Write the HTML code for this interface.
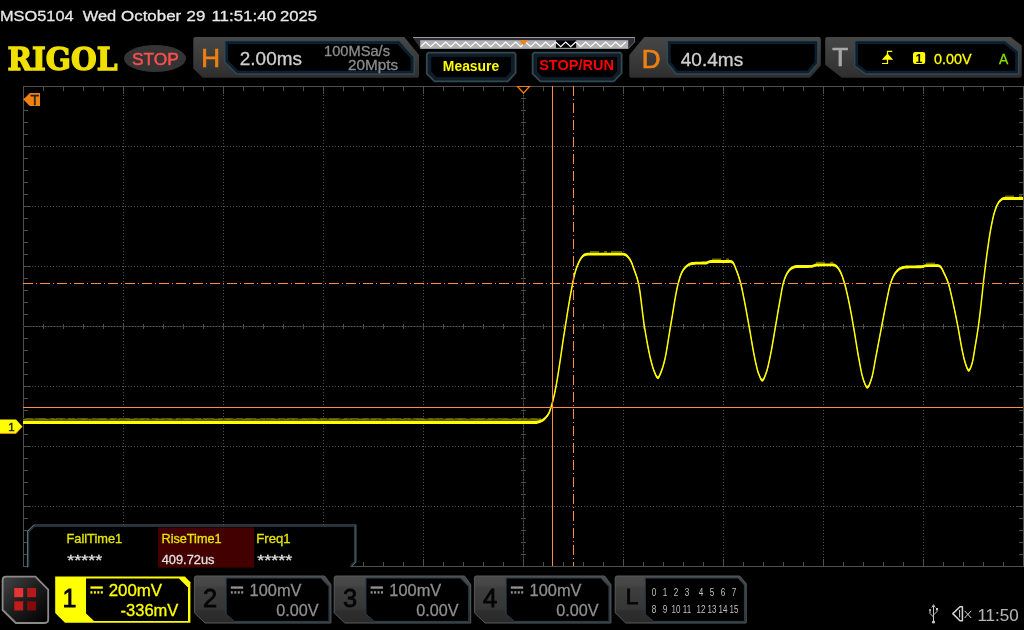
<!DOCTYPE html>
<html lang="en"><head><meta charset="utf-8"><title>RIGOL MSO5104</title>
<style>
html,body{margin:0;padding:0;background:#000;overflow:hidden}
svg{display:block;will-change:transform;font-family:"Liberation Sans",sans-serif}
</style></head><body>
<svg width="1024" height="630" viewBox="0 0 1024 630">
<rect width="1024" height="630" fill="#000"/>
<!-- plot -->
<g shape-rendering="crispEdges"><path d="M23.5 86.5H1023.5V566.5H23.5Z" fill="none" stroke="#4d4f4b" stroke-width="1"/><path d="M123.5 86V566M223.5 86V566M323.5 86V566M423.5 86V566M623.5 86V566M723.5 86V566M823.5 86V566M923.5 86V566" stroke="#525450" stroke-width="1" stroke-dasharray="1 2" stroke-dashoffset="0" fill="none"/><path d="M23 146.5H1023M23 206.5H1023M23 266.5H1023M23 386.5H1023M23 446.5H1023M23 506.5H1023" stroke="#525450" stroke-width="1" stroke-dasharray="1 2" fill="none"/><path d="M523.5 94V566M23 326.5H1023" stroke="#2b312b" stroke-width="1" fill="none"/><path d="M523.5 95V566M24 326.5H1023" stroke="#545c54" stroke-width="1" stroke-dasharray="1 2" fill="none"/><path d="M43.5 87v4M43.5 566v-4M43.5 324v5M63.5 87v4M63.5 566v-4M63.5 324v5M83.5 87v4M83.5 566v-4M83.5 324v5M103.5 87v4M103.5 566v-4M103.5 324v5M123.5 87v7M123.5 566v-7M123.5 324v5M143.5 87v4M143.5 566v-4M143.5 324v5M163.5 87v4M163.5 566v-4M163.5 324v5M183.5 87v4M183.5 566v-4M183.5 324v5M203.5 87v4M203.5 566v-4M203.5 324v5M223.5 87v7M223.5 566v-7M223.5 324v5M243.5 87v4M243.5 566v-4M243.5 324v5M263.5 87v4M263.5 566v-4M263.5 324v5M283.5 87v4M283.5 566v-4M283.5 324v5M303.5 87v4M303.5 566v-4M303.5 324v5M323.5 87v7M323.5 566v-7M323.5 324v5M343.5 87v4M343.5 566v-4M343.5 324v5M363.5 87v4M363.5 566v-4M363.5 324v5M383.5 87v4M383.5 566v-4M383.5 324v5M403.5 87v4M403.5 566v-4M403.5 324v5M423.5 87v7M423.5 566v-7M423.5 324v5M443.5 87v4M443.5 566v-4M443.5 324v5M463.5 87v4M463.5 566v-4M463.5 324v5M483.5 87v4M483.5 566v-4M483.5 324v5M503.5 87v4M503.5 566v-4M503.5 324v5M523.5 87v7M523.5 566v-7M523.5 324v5M543.5 87v4M543.5 566v-4M543.5 324v5M563.5 87v4M563.5 566v-4M563.5 324v5M583.5 87v4M583.5 566v-4M583.5 324v5M603.5 87v4M603.5 566v-4M603.5 324v5M623.5 87v7M623.5 566v-7M623.5 324v5M643.5 87v4M643.5 566v-4M643.5 324v5M663.5 87v4M663.5 566v-4M663.5 324v5M683.5 87v4M683.5 566v-4M683.5 324v5M703.5 87v4M703.5 566v-4M703.5 324v5M723.5 87v7M723.5 566v-7M723.5 324v5M743.5 87v4M743.5 566v-4M743.5 324v5M763.5 87v4M763.5 566v-4M763.5 324v5M783.5 87v4M783.5 566v-4M783.5 324v5M803.5 87v4M803.5 566v-4M803.5 324v5M823.5 87v7M823.5 566v-7M823.5 324v5M843.5 87v4M843.5 566v-4M843.5 324v5M863.5 87v4M863.5 566v-4M863.5 324v5M883.5 87v4M883.5 566v-4M883.5 324v5M903.5 87v4M903.5 566v-4M903.5 324v5M923.5 87v7M923.5 566v-7M923.5 324v5M943.5 87v4M943.5 566v-4M943.5 324v5M963.5 87v4M963.5 566v-4M963.5 324v5M983.5 87v4M983.5 566v-4M983.5 324v5M1003.5 87v4M1003.5 566v-4M1003.5 324v5M24 98.5h4M1023 98.5h-4M521 98.5h5M24 110.5h4M1023 110.5h-4M521 110.5h5M24 122.5h4M1023 122.5h-4M521 122.5h5M24 134.5h4M1023 134.5h-4M521 134.5h5M24 146.5h7M1023 146.5h-7M521 146.5h5M24 158.5h4M1023 158.5h-4M521 158.5h5M24 170.5h4M1023 170.5h-4M521 170.5h5M24 182.5h4M1023 182.5h-4M521 182.5h5M24 194.5h4M1023 194.5h-4M521 194.5h5M24 206.5h7M1023 206.5h-7M521 206.5h5M24 218.5h4M1023 218.5h-4M521 218.5h5M24 230.5h4M1023 230.5h-4M521 230.5h5M24 242.5h4M1023 242.5h-4M521 242.5h5M24 254.5h4M1023 254.5h-4M521 254.5h5M24 266.5h7M1023 266.5h-7M521 266.5h5M24 278.5h4M1023 278.5h-4M521 278.5h5M24 290.5h4M1023 290.5h-4M521 290.5h5M24 302.5h4M1023 302.5h-4M521 302.5h5M24 314.5h4M1023 314.5h-4M521 314.5h5M24 326.5h7M1023 326.5h-7M521 326.5h5M24 338.5h4M1023 338.5h-4M521 338.5h5M24 350.5h4M1023 350.5h-4M521 350.5h5M24 362.5h4M1023 362.5h-4M521 362.5h5M24 374.5h4M1023 374.5h-4M521 374.5h5M24 386.5h7M1023 386.5h-7M521 386.5h5M24 398.5h4M1023 398.5h-4M521 398.5h5M24 410.5h4M1023 410.5h-4M521 410.5h5M24 422.5h4M1023 422.5h-4M521 422.5h5M24 434.5h4M1023 434.5h-4M521 434.5h5M24 446.5h7M1023 446.5h-7M521 446.5h5M24 458.5h4M1023 458.5h-4M521 458.5h5M24 470.5h4M1023 470.5h-4M521 470.5h5M24 482.5h4M1023 482.5h-4M521 482.5h5M24 494.5h4M1023 494.5h-4M521 494.5h5M24 506.5h7M1023 506.5h-7M521 506.5h5M24 518.5h4M1023 518.5h-4M521 518.5h5M24 530.5h4M1023 530.5h-4M521 530.5h5M24 542.5h4M1023 542.5h-4M521 542.5h5M24 554.5h4M1023 554.5h-4M521 554.5h5" stroke="#4d4f4b" stroke-width="1" fill="none"/></g>
<rect x="23" y="418" width="518" height="3" fill="#5e5a00" /><path d="M23 418.5H541" stroke="#000" stroke-width="1" stroke-dasharray="3 7 2 11 4 5 1 9" opacity="0.55" fill="none"/><path d="M23 419.5H541" stroke="#8a8600" stroke-width="1" stroke-dasharray="5 3 2 6 9 4" opacity="0.6" fill="none"/><path d="M590 251.89999999999998L622 251.89999999999998" stroke="#6e6a00" stroke-width="1.6" stroke-dasharray="9 5 3 4 12 6" fill="none"/><path d="M712 259.2L730 259.2" stroke="#6e6a00" stroke-width="1.6" stroke-dasharray="9 5 3 4 12 6" fill="none"/><path d="M816 262.59999999999997L833 262.59999999999997" stroke="#6e6a00" stroke-width="1.6" stroke-dasharray="9 5 3 4 12 6" fill="none"/><path d="M926 263.4L938 263.4" stroke="#6e6a00" stroke-width="1.6" stroke-dasharray="9 5 3 4 12 6" fill="none"/><path d="M1005 196.2L1023 196.2" stroke="#6e6a00" stroke-width="1.6" stroke-dasharray="9 5 3 4 12 6" fill="none"/><rect x="23" y="421" width="514" height="3" fill="#ffff00" shape-rendering="crispEdges"/><path d="M536 420.9 537 420.8 538 420.6 539 420.3 540 420.0 541 419.6 542 419.2 543 418.6 544 417.8 545 416.9 546 415.9 547 414.7 548 413.3 549 411.6 550 409.0 551 405.9 552 402.6 553 398.9 554 394.8 555 390.1 556 384.9 557 379.3 558 373.2 559 366.7 560 360.2 561 353.3 562 346.3 563 339.6 564 333.2 565 326.9 566 320.6 567 314.2 568 307.9 569 301.8 570 296.1 571 290.6 572 285.4 573 280.2 574 275.3 575 271.3 576 268.0 577 265.2 578 262.7 579 260.4 580 258.4 581 256.9 582 255.5 583 254.4 584 253.6 585 253.3 586 252.9 587 252.8 588 252.8 589 252.8 590 252.8 591 252.8 592 252.8 593 252.8 594 252.8 595 252.8 596 252.8 597 252.8 598 252.8 599 252.8 600 252.8 601 252.8 602 252.8 603 252.8 604 252.8 605 252.8 606 252.8 607 252.8 608 252.8 609 252.8 610 252.8 611 252.8 612 252.8 613 252.8 614 252.8 615 252.8 616 252.8 617 252.8 618 252.8 619 252.8 620 252.8 621 252.8 622 252.8 623 252.8 624 252.9 625 253.2 626 253.6 627 254.3 628 255.4 629 256.7 630 258.1 631 259.8 632 262.2 633 264.9 634 267.8 635 270.5 636 273.3 637 276.3 638 279.9 639 284.4 640 290.7 641 298.4 642 306.7 643 314.9 644 322.4 645 328.6 646 334.5 647 340.2 648 345.6 649 350.6 650 355.2 651 359.3 652 363.1 653 366.5 654 369.4 655 371.9 656 374.2 657 375.9 658 376.4 659 375.3 660 373.1 661 370.6 662 368.1 663 364.9 664 361.3 665 357.3 666 352.3 667 346.6 668 340.4 669 334.0 670 327.9 671 322.1 672 316.0 673 309.9 674 303.7 675 297.7 676 292.1 677 287.1 678 282.7 679 279.0 680 275.6 681 272.8 682 270.5 683 268.9 684 267.4 685 266.2 686 265.2 687 264.4 688 263.7 689 263.1 690 262.7 691 262.3 692 262.1 693 262.0 694 261.9 695 261.8 696 261.8 697 261.7 698 261.7 699 261.7 700 261.7 701 261.7 702 261.6 703 261.6 704 261.6 705 261.6 706 261.6 707 261.3 708 260.8 709 260.4 710 260.2 711 260.1 712 260.1 713 260.1 714 260.1 715 260.0 716 260.0 717 260.0 718 260.0 719 260.0 720 260.0 721 260.0 722 260.0 723 260.0 724 260.0 725 260.0 726 260.0 727 260.0 728 260.0 729 260.0 730 259.9 731 260.1 732 260.5 733 261.1 734 262.8 735 265.2 736 267.8 737 270.3 738 273.1 739 276.1 740 279.4 741 283.1 742 287.5 743 292.4 744 297.4 745 302.6 746 307.9 747 313.3 748 318.9 749 324.4 750 330.1 751 336.0 752 342.0 753 347.7 754 353.0 755 357.9 756 362.6 757 367.0 758 370.5 759 373.2 760 375.8 761 377.8 762 378.9 763 378.6 764 377.0 765 374.6 766 371.9 767 368.9 768 365.1 769 360.6 770 355.9 771 351.0 772 345.6 773 339.8 774 333.8 775 327.9 776 322.1 777 316.2 778 310.3 779 304.5 780 298.9 781 293.0 782 287.4 783 282.7 784 279.2 785 276.3 786 273.9 787 272.1 788 270.5 789 269.1 790 268.0 791 267.1 792 266.5 793 266.0 794 265.6 795 265.3 796 265.1 797 265.1 798 265.1 799 265.1 800 265.0 801 265.0 802 265.0 803 265.0 804 265.0 805 265.0 806 265.0 807 265.0 808 265.0 809 264.9 810 264.9 811 264.9 812 264.9 813 264.6 814 264.2 815 263.8 816 263.6 817 263.5 818 263.5 819 263.5 820 263.5 821 263.4 822 263.4 823 263.4 824 263.4 825 263.4 826 263.4 827 263.4 828 263.4 829 263.4 830 263.4 831 263.4 832 263.4 833 263.4 834 263.5 835 263.9 836 264.5 837 265.3 838 266.5 839 268.0 840 269.6 841 271.6 842 274.2 843 277.0 844 280.2 845 283.5 846 287.4 847 291.6 848 296.2 849 301.0 850 305.9 851 311.2 852 316.7 853 322.4 854 328.1 855 334.2 856 340.5 857 346.7 858 352.5 859 358.0 860 363.5 861 368.7 862 373.4 863 377.1 864 380.0 865 382.7 866 384.8 867 385.9 868 385.6 869 384.1 870 381.7 871 378.8 872 375.7 873 371.2 874 365.9 875 360.1 876 354.7 877 349.5 878 344.3 879 338.9 880 333.6 881 328.3 882 323.1 883 317.8 884 312.6 885 307.4 886 302.3 887 297.5 888 292.6 889 287.9 890 283.8 891 280.7 892 277.9 893 275.6 894 273.6 895 272.0 896 270.7 897 269.5 898 268.6 899 267.8 900 267.2 901 266.7 902 266.3 903 266.1 904 265.9 905 265.7 906 265.6 907 265.5 908 265.5 909 265.4 910 265.4 911 265.4 912 265.4 913 265.4 914 265.4 915 265.4 916 265.4 917 265.3 918 265.3 919 265.3 920 265.3 921 265.3 922 265.2 923 265.1 924 264.7 925 264.4 926 264.2 927 264.2 928 264.2 929 264.2 930 264.2 931 264.2 932 264.2 933 264.2 934 264.2 935 264.2 936 264.2 937 264.2 938 264.2 939 264.4 940 264.9 941 265.8 942 267.4 943 269.5 944 271.6 945 273.7 946 275.8 947 278.2 948 280.9 949 284.0 950 287.8 951 292.1 952 296.7 953 301.2 954 305.8 955 310.6 956 315.6 957 320.6 958 325.8 959 331.3 960 337.1 961 342.8 962 348.1 963 352.7 964 357.0 965 360.8 966 363.8 967 366.5 968 368.6 969 369.0 970 367.7 971 365.2 972 362.3 973 358.1 974 352.3 975 346.0 976 340.0 977 333.9 978 327.3 979 320.1 980 312.3 981 303.8 982 294.3 983 284.7 984 276.0 985 267.7 986 259.8 987 252.3 988 245.1 989 238.2 990 231.8 991 226.2 992 221.1 993 216.5 994 212.4 995 209.0 996 206.3 997 203.9 998 201.9 999 200.4 1000 199.3 1001 198.4 1002 197.6 1003 197.2 1004 197.1 1005 197.1 1006 197.1 1007 197.1 1008 197.1 1009 197.1 1010 197.1 1011 197.1 1012 197.1 1013 197.1 1014 197.1 1015 197.1 1016 197.1 1017 197.1 1018 197.1 1019 197.1 1020 197.1 1021 197.1 1022 197.1 1023 197.1 1023 199.9 1022 199.9 1021 199.9 1020 199.9 1019 199.9 1018 199.9 1017 199.9 1016 199.9 1015 199.9 1014 199.9 1013 199.9 1012 199.9 1011 199.9 1010 199.9 1009 199.9 1008 199.9 1007 199.9 1006 199.9 1005 199.9 1004 199.9 1003 200.1 1002 200.5 1001 201.3 1000 202.2 999 203.3 998 204.8 997 206.8 996 209.2 995 211.9 994 215.3 993 219.4 992 224.0 991 229.0 990 234.7 989 241.1 988 248.0 987 255.2 986 262.7 985 270.6 984 278.9 983 287.6 982 297.2 981 306.7 980 315.2 979 323.0 978 330.2 977 336.8 976 342.9 975 348.9 974 355.2 973 361.0 972 365.2 971 368.1 970 370.6 969 371.9 968 371.5 967 369.4 966 366.7 965 363.7 964 359.9 963 355.6 962 351.0 961 345.7 960 340.0 959 334.2 958 328.7 957 323.5 956 318.5 955 313.5 954 308.7 953 304.1 952 299.6 951 295.0 950 290.7 949 286.9 948 283.8 947 281.1 946 278.7 945 276.6 944 274.5 943 272.4 942 270.3 941 268.7 940 267.8 939 267.3 938 267.1 937 267.1 936 267.1 935 267.1 934 267.1 933 267.1 932 267.1 931 267.1 930 267.1 929 267.1 928 267.1 927 267.1 926 267.1 925 267.3 924 267.6 923 268.0 922 268.1 921 268.2 920 268.2 919 268.2 918 268.2 917 268.2 916 268.3 915 268.3 914 268.3 913 268.3 912 268.3 911 268.3 910 268.3 909 268.3 908 268.4 907 268.4 906 268.5 905 268.6 904 268.8 903 269.0 902 269.2 901 269.6 900 270.1 899 270.7 898 271.5 897 272.4 896 273.6 895 274.9 894 276.5 893 278.5 892 280.8 891 283.6 890 286.7 889 290.8 888 295.5 887 300.4 886 305.2 885 310.3 884 315.5 883 320.7 882 326.0 881 331.2 880 336.5 879 341.8 878 347.2 877 352.4 876 357.6 875 363.0 874 368.8 873 374.1 872 378.6 871 381.7 870 384.6 869 387.0 868 388.5 867 388.8 866 387.7 865 385.6 864 382.9 863 380.0 862 376.3 861 371.6 860 366.4 859 360.9 858 355.4 857 349.6 856 343.4 855 337.1 854 331.0 853 325.3 852 319.6 851 314.1 850 308.8 849 303.9 848 299.1 847 294.5 846 290.3 845 286.4 844 283.1 843 279.9 842 277.1 841 274.5 840 272.5 839 270.9 838 269.4 837 268.2 836 267.4 835 266.8 834 266.4 833 266.2 832 266.3 831 266.3 830 266.3 829 266.3 828 266.3 827 266.3 826 266.3 825 266.3 824 266.3 823 266.3 822 266.3 821 266.3 820 266.4 819 266.4 818 266.4 817 266.4 816 266.4 815 266.7 814 267.1 813 267.5 812 267.8 811 267.8 810 267.8 809 267.8 808 267.9 807 267.9 806 267.9 805 267.9 804 267.9 803 267.9 802 267.9 801 267.9 800 267.9 799 268.0 798 268.0 797 268.0 796 268.0 795 268.2 794 268.5 793 268.9 792 269.4 791 270.0 790 270.9 789 272.0 788 273.4 787 275.0 786 276.8 785 279.2 784 282.1 783 285.6 782 290.3 781 295.9 780 301.8 779 307.4 778 313.2 777 319.1 776 325.0 775 330.8 774 336.7 773 342.7 772 348.5 771 353.9 770 358.8 769 363.5 768 368.0 767 371.8 766 374.8 765 377.5 764 379.9 763 381.5 762 381.8 761 380.7 760 378.7 759 376.1 758 373.4 757 369.9 756 365.5 755 360.8 754 355.9 753 350.6 752 344.9 751 338.9 750 333.0 749 327.3 748 321.8 747 316.2 746 310.8 745 305.5 744 300.3 743 295.3 742 290.4 741 286.0 740 282.3 739 279.0 738 276.0 737 273.2 736 270.7 735 268.1 734 265.7 733 264.0 732 263.4 731 263.0 730 262.8 729 262.9 728 262.9 727 262.9 726 262.9 725 262.9 724 262.9 723 262.9 722 262.9 721 262.9 720 262.9 719 262.9 718 262.9 717 262.9 716 262.9 715 262.9 714 263.0 713 263.0 712 263.0 711 263.0 710 263.1 709 263.3 708 263.7 707 264.2 706 264.4 705 264.5 704 264.5 703 264.5 702 264.5 701 264.6 700 264.6 699 264.6 698 264.6 697 264.6 696 264.6 695 264.7 694 264.8 693 264.9 692 265.0 691 265.2 690 265.6 689 266.0 688 266.6 687 267.3 686 268.1 685 269.1 684 270.3 683 271.8 682 273.4 681 275.7 680 278.5 679 281.9 678 285.6 677 290.0 676 295.0 675 300.6 674 306.6 673 312.8 672 318.9 671 325.0 670 330.8 669 336.9 668 343.3 667 349.5 666 355.2 665 360.2 664 364.2 663 367.8 662 371.0 661 373.5 660 376.0 659 378.2 658 379.3 657 378.8 656 377.1 655 374.8 654 372.3 653 369.4 652 366.0 651 362.2 650 358.1 649 353.5 648 348.5 647 343.1 646 337.4 645 331.5 644 325.3 643 317.8 642 309.6 641 301.3 640 293.6 639 287.3 638 282.8 637 279.2 636 276.2 635 273.4 634 270.7 633 267.8 632 265.1 631 262.7 630 261.0 629 259.6 628 258.3 627 257.2 626 256.5 625 256.1 624 255.8 623 255.6 622 255.6 621 255.6 620 255.6 619 255.6 618 255.6 617 255.6 616 255.6 615 255.6 614 255.6 613 255.6 612 255.6 611 255.6 610 255.6 609 255.6 608 255.6 607 255.6 606 255.6 605 255.6 604 255.6 603 255.6 602 255.6 601 255.6 600 255.6 599 255.6 598 255.6 597 255.6 596 255.6 595 255.6 594 255.6 593 255.6 592 255.6 591 255.6 590 255.6 589 255.6 588 255.6 587 255.7 586 255.8 585 256.2 584 256.5 583 257.3 582 258.4 581 259.8 580 261.3 579 263.3 578 265.6 577 268.1 576 270.9 575 274.2 574 278.2 573 283.1 572 288.3 571 293.5 570 299.0 569 304.7 568 310.8 567 317.1 566 323.5 565 329.8 564 336.1 563 342.4 562 349.2 561 356.2 560 363.1 559 369.6 558 376.1 557 382.2 556 387.8 555 393.0 554 397.7 553 401.8 552 405.5 551 408.8 550 411.9 549 414.4 548 416.2 547 417.6 546 418.8 545 419.8 544 420.7 543 421.5 542 422.1 541 422.5 540 422.9 539 423.2 538 423.5 537 423.7 536 423.8Z" fill="#ffff00"/><path d="M536 422.4 537 422.3 538 422.1 539 421.8 540 421.5 541 421.1 542 420.6 543 420.0 544 419.3 545 418.3 546 417.3 547 416.1 548 414.7 549 413.0 550 410.4 551 407.3 552 404.0 553 400.4 554 396.2 555 391.5 556 386.4 557 380.8 558 374.6 559 368.2 560 361.7 561 354.8 562 347.8 563 341.0 564 334.6 565 328.4 566 322.1 567 315.7 568 309.3 569 303.3 570 297.6 571 292.1 572 286.8 573 281.7 574 276.7 575 272.7 576 269.5 577 266.6 578 264.1 579 261.9 580 259.9 581 258.3 582 257.0 583 255.8 584 255.1 585 254.7 586 254.4 587 254.2 588 254.2 589 254.2 590 254.2 591 254.2 592 254.2 593 254.2 594 254.2 595 254.2 596 254.2 597 254.2 598 254.2 599 254.2 600 254.2 601 254.2 602 254.2 603 254.2 604 254.2 605 254.2 606 254.2 607 254.2 608 254.2 609 254.2 610 254.2 611 254.2 612 254.2 613 254.2 614 254.2 615 254.2 616 254.2 617 254.2 618 254.2 619 254.2 620 254.2 621 254.2 622 254.2 623 254.2 624 254.3 625 254.7 626 255.1 627 255.8 628 256.8 629 258.1 630 259.6 631 261.3 632 263.6 633 266.4 634 269.2 635 272.0 636 274.7 637 277.8 638 281.3 639 285.8 640 292.2 641 299.9 642 308.2 643 316.4 644 323.8 645 330.0 646 336.0 647 341.6 648 347.0 649 352.1 650 356.7 651 360.8 652 364.6 653 368.0 654 370.9 655 373.3 656 375.7 657 377.4 658 377.9 659 376.8 660 374.6 661 372.1 662 369.5 663 366.4 664 362.8 665 358.7 666 353.8 667 348.0 668 341.8 669 335.5 670 329.3 671 323.5 672 317.5 673 311.3 674 305.2 675 299.2 676 293.6 677 288.5 678 284.2 679 280.5 680 277.1 681 274.2 682 272.0 683 270.3 684 268.9 685 267.6 686 266.6 687 265.9 688 265.2 689 264.6 690 264.1 691 263.8 692 263.6 693 263.5 694 263.3 695 263.3 696 263.2 697 263.2 698 263.1 699 263.1 700 263.1 701 263.1 702 263.1 703 263.1 704 263.1 705 263.0 706 263.0 707 262.8 708 262.3 709 261.8 710 261.6 711 261.6 712 261.6 713 261.5 714 261.5 715 261.5 716 261.5 717 261.5 718 261.5 719 261.4 720 261.4 721 261.4 722 261.4 723 261.4 724 261.4 725 261.4 726 261.4 727 261.4 728 261.4 729 261.4 730 261.4 731 261.5 732 261.9 733 262.5 734 264.2 735 266.6 736 269.3 737 271.8 738 274.5 739 277.6 740 280.9 741 284.6 742 289.0 743 293.9 744 298.9 745 304.0 746 309.4 747 314.8 748 320.3 749 325.8 750 331.5 751 337.5 752 343.4 753 349.1 754 354.4 755 359.3 756 364.1 757 368.4 758 372.0 759 374.7 760 377.2 761 379.3 762 380.3 763 380.0 764 378.4 765 376.0 766 373.3 767 370.4 768 366.5 769 362.1 770 357.3 771 352.4 772 347.0 773 341.2 774 335.3 775 329.3 776 323.5 777 317.6 778 311.7 779 305.9 780 300.3 781 294.4 782 288.8 783 284.2 784 280.7 785 277.7 786 275.4 787 273.5 788 271.9 789 270.6 790 269.4 791 268.6 792 268.0 793 267.5 794 267.0 795 266.7 796 266.6 797 266.6 798 266.5 799 266.5 800 266.5 801 266.5 802 266.5 803 266.5 804 266.4 805 266.4 806 266.4 807 266.4 808 266.4 809 266.4 810 266.4 811 266.3 812 266.3 813 266.1 814 265.6 815 265.2 816 265.0 817 265.0 818 264.9 819 264.9 820 264.9 821 264.9 822 264.9 823 264.9 824 264.8 825 264.8 826 264.8 827 264.8 828 264.8 829 264.8 830 264.8 831 264.8 832 264.8 833 264.8 834 265.0 835 265.4 836 265.9 837 266.8 838 268.0 839 269.4 840 271.1 841 273.1 842 275.6 843 278.5 844 281.6 845 285.0 846 288.8 847 293.1 848 297.7 849 302.4 850 307.4 851 312.7 852 318.2 853 323.8 854 329.6 855 335.7 856 341.9 857 348.1 858 354.0 859 359.4 860 364.9 861 370.2 862 374.9 863 378.5 864 381.4 865 384.1 866 386.2 867 387.3 868 387.0 869 385.5 870 383.1 871 380.3 872 377.1 873 372.7 874 367.3 875 361.6 876 356.2 877 351.0 878 345.7 879 340.4 880 335.1 881 329.8 882 324.5 883 319.3 884 314.0 885 308.8 886 303.8 887 298.9 888 294.1 889 289.4 890 285.3 891 282.1 892 279.4 893 277.0 894 275.1 895 273.5 896 272.1 897 270.9 898 270.0 899 269.3 900 268.7 901 268.1 902 267.8 903 267.5 904 267.3 905 267.2 906 267.1 907 267.0 908 266.9 909 266.9 910 266.9 911 266.8 912 266.8 913 266.8 914 266.8 915 266.8 916 266.8 917 266.8 918 266.8 919 266.8 920 266.8 921 266.7 922 266.7 923 266.5 924 266.2 925 265.9 926 265.7 927 265.7 928 265.7 929 265.7 930 265.6 931 265.6 932 265.6 933 265.6 934 265.6 935 265.6 936 265.6 937 265.6 938 265.6 939 265.9 940 266.3 941 267.2 942 268.9 943 270.9 944 273.1 945 275.1 946 277.3 947 279.6 948 282.3 949 285.5 950 289.3 951 293.6 952 298.1 953 302.7 954 307.3 955 312.1 956 317.0 957 322.1 958 327.2 959 332.7 960 338.5 961 344.2 962 349.5 963 354.1 964 358.5 965 362.3 966 365.2 967 368.0 968 370.0 969 370.4 970 369.1 971 366.7 972 363.8 973 359.5 974 353.7 975 347.4 976 341.5 977 335.3 978 328.8 979 321.6 980 313.7 981 305.2 982 295.8 983 286.2 984 277.5 985 269.2 986 261.2 987 253.7 988 246.6 989 239.6 990 233.2 991 227.6 992 222.6 993 217.9 994 213.8 995 210.5 996 207.8 997 205.3 998 203.3 999 201.8 1000 200.8 1001 199.8 1002 199.1 1003 198.6 1004 198.5 1005 198.5 1006 198.5 1007 198.5 1008 198.5 1009 198.5 1010 198.5 1011 198.5 1012 198.5 1013 198.5 1014 198.5 1015 198.5 1016 198.5 1017 198.5 1018 198.5 1019 198.5 1020 198.5 1021 198.5 1022 198.5 1023 198.5" fill="none" stroke="#ffff00" stroke-width="1.5" stroke-linejoin="round"/>
<g shape-rendering="crispEdges"><path d="M552.5 86V566M23 407.5H1023" stroke="#ff8c40" stroke-width="1" fill="none"/><path d="M573.5 86V566M23 283.5H1023" stroke="#ff8c40" stroke-width="1" stroke-dasharray="10 3 1 3" fill="none"/></g>
<path d="M517.5 86.5H529.5L523.5 93Z" fill="#000" stroke="#f08010" stroke-width="1.2"/>
<path d="M23.3 99.5L29.8 93H40V106H29.8Z" fill="#f08010"/><text x="34.7" y="105.3" font-size="14" fill="#222" stroke="#222" stroke-width="0.4" text-anchor="middle" font-family="Liberation Sans, sans-serif">T</text>
<path d="M0 419.5H16L22.3 426.5L16 433.5H0Z" fill="#ffff00"/><path d="M0 433.5H16L22.3 426.5" stroke="#f08010" stroke-width="1" fill="none"/><text x="8.3" y="431" font-size="11.5" fill="#222" stroke="#222" stroke-width="0.4" font-family="Liberation Sans, sans-serif">1</text>
<!-- top bar -->
<defs>
<linearGradient id="gp" x1="0" y1="0" x2="0" y2="1"><stop offset="0" stop-color="#474747"/><stop offset="0.3" stop-color="#404040"/><stop offset="0.75" stop-color="#353535"/><stop offset="1" stop-color="#2e2e2e"/></linearGradient>
<linearGradient id="gb" x1="0" y1="0" x2="0" y2="1"><stop offset="0" stop-color="#4a4a4a"/><stop offset="0.2" stop-color="#454545"/><stop offset="0.25" stop-color="#3e3e3e"/><stop offset="0.7" stop-color="#363636"/><stop offset="0.75" stop-color="#2e2e2e"/><stop offset="1" stop-color="#2a2a2a"/></linearGradient>
<linearGradient id="gm" x1="0" y1="0" x2="1" y2="1"><stop offset="0" stop-color="#444"/><stop offset="0.5" stop-color="#1c1c1c"/><stop offset="1" stop-color="#000"/></linearGradient>
<linearGradient id="gr" x1="0" y1="0" x2="1" y2="1"><stop offset="0" stop-color="#f03838"/><stop offset="1" stop-color="#780404"/></linearGradient>
</defs>
<text x="-0.04" y="21.4" font-size="15.5" fill="#e8e8e8" textLength="73.62" lengthAdjust="spacingAndGlyphs"  stroke="#e8e8e8" stroke-width="0.3">MSO5104</text>
<text x="82.73" y="21.4" font-size="15.5" fill="#e8e8e8" textLength="33.52" lengthAdjust="spacingAndGlyphs"  stroke="#e8e8e8" stroke-width="0.3">Wed</text>
<text x="121.1" y="21.4" font-size="15.5" fill="#e8e8e8" textLength="60.08" lengthAdjust="spacingAndGlyphs"  stroke="#e8e8e8" stroke-width="0.3">October</text>
<text x="186.55" y="21.4" font-size="15.5" fill="#e8e8e8" textLength="18.75" lengthAdjust="spacingAndGlyphs"  stroke="#e8e8e8" stroke-width="0.3">29</text>
<text x="211.44" y="21.4" font-size="15.5" fill="#e8e8e8" textLength="64.61" lengthAdjust="spacingAndGlyphs"  stroke="#e8e8e8" stroke-width="0.3">11:51:40</text>
<text x="279.96" y="21.4" font-size="15.5" fill="#e8e8e8" textLength="37.04" lengthAdjust="spacingAndGlyphs"  stroke="#e8e8e8" stroke-width="0.3">2025</text>
<text x="7.5" y="69.9" font-family="DejaVu Serif, Liberation Serif, serif" font-weight="bold" font-size="31" fill="#f0e000" stroke="#f0e000" stroke-width="1.3" stroke-linejoin="miter" textLength="110" lengthAdjust="spacingAndGlyphs">RIGOL</text>
<ellipse cx="155" cy="58.5" rx="31" ry="13.5" fill="#343434"/>
<text x="131.92" y="64.8" font-size="16" fill="#ff4e4e" textLength="46.89" lengthAdjust="spacingAndGlyphs" stroke="#ff4e4e" stroke-width="0.45">STOP</text>
<path d="M195.3 37H404.3L419 55V75.8Q419 77.7 417 77.7H202.7L193.3 68.6V39Q193.3 37 195.3 37Z" fill="url(#gp)"/>
<path d="M224.8 40.6L399.4 40.6L414.2 56.8L414.2 74L236.8 74L224.8 62Z" fill="#171b1d" stroke="#2c4a58" stroke-width="1.4"/><path d="M227.6 43.4L397.6 43.4L411.2 58L411.2 71.4L238.2 71.4L227.6 60.8Z" fill="#000" stroke="#08223f" stroke-width="1.1"/>
<text x="201.2" y="66.9" font-size="26" fill="#f08010" stroke="#f08010" stroke-width="0.7">H</text>
<text x="239.85" y="65" font-size="18.5" fill="#cfcfcf" textLength="62.03" lengthAdjust="spacingAndGlyphs"  stroke="#cfcfcf" stroke-width="0.3">2.00ms</text>
<text x="324.08" y="56.3" font-size="14" fill="#8c8c8c" textLength="65.94" lengthAdjust="spacingAndGlyphs"  stroke="#8c8c8c" stroke-width="0.3">100MSa/s</text>
<text x="348.03" y="70" font-size="14" fill="#8c8c8c" textLength="50.02" lengthAdjust="spacingAndGlyphs"  stroke="#8c8c8c" stroke-width="0.3">20Mpts</text>
<path d="M413 37.5H635V42L628.3 48.8H420.2Z" fill="#2e2e36"/>
<path d="M413 37.5H635" stroke="#9a9a9a" stroke-width="1"/><path d="M634.6 37.5V42L628.3 48.6" stroke="#777" stroke-width="0.8" fill="none"/>
<rect x="420.2" y="40.2" width="208" height="8.6" fill="#b2b2b4"/>
<rect x="556" y="40.2" width="20.2" height="7.6" fill="#000"/>
<path d="M420.7 46.7L425.7 42L430.7 46.7L435.7 42L440.7 46.7L445.7 42L450.7 46.7L455.7 42L460.7 46.7L465.7 42L470.7 46.7L475.7 42L480.7 46.7L485.7 42L490.7 46.7L495.7 42L500.7 46.7L505.7 42L510.7 46.7L515.7 42L520.7 46.7L525.7 42L530.7 46.7L535.7 42L540.7 46.7L545.7 42L550.7 46.7L555.7 42L560.7 46.7L565.7 42L570.7 46.7L575.7 42L580.7 46.7L585.7 42L590.7 46.7L595.7 42L600.7 46.7L605.7 42L610.7 46.7L615.7 42L620.7 46.7L625.7 42" fill="none" stroke="#fff" stroke-width="1.1" stroke-linejoin="miter"/>
<path d="M518.9 40.2H528.1L523.5 45.2Z" fill="#f08010"/>
<path d="M428.3 52.6L514.1 52.6L515.6 54.1L515.6 73.0L507.8 81.4L434.6 81.4L426.8 73.6L426.8 54.1Z" fill="#171b1d" stroke="#2e4a56" stroke-width="1.8"/><path d="M430.7 56.2L511.7 56.2L511.7 71.6L506.0 77.9L436.4 77.9L430.7 72.0Z" fill="#000" stroke="#08223f" stroke-width="1.1"/>
<path d="M534.1 52.6L620.1 52.6L621.6 54.1L621.6 73.0L613.8 81.4L540.4 81.4L532.6 73.6L532.6 54.1Z" fill="#171b1d" stroke="#2e4a56" stroke-width="1.8"/><path d="M536.5 56.2L617.7 56.2L617.7 71.6L612.0 77.9L542.2 77.9L536.5 72.0Z" fill="#000" stroke="#08223f" stroke-width="1.1"/>
<text x="442.87" y="71.2" font-size="14" fill="#ffff00" textLength="56.3" lengthAdjust="spacingAndGlyphs" font-weight="bold" >Measure</text>
<text x="539.18" y="70.1" font-size="14" fill="#ff0000" textLength="74.79" lengthAdjust="spacingAndGlyphs" font-weight="bold" >STOP/RUN</text>
<path d="M644.2 37H818.8Q820.8 37 820.8 39V65.6L810 77.8H631.3Q629.3 77.8 629.3 75.8V54.9Z" fill="url(#gp)"/>
<path d="M667.3 40.6L817.9 40.6L817.9 63.5L808.7 74L676.2 74L667.3 63Z" fill="#171b1d" stroke="#2c4a58" stroke-width="1.4"/><path d="M670.1 43.4L815.2 43.4L815.2 62.6L807.4 71.4L677.4 71.4L670.1 62Z" fill="#000" stroke="#08223f" stroke-width="1.1"/>
<text x="641.8" y="67.5" font-size="26" fill="#f08010" stroke="#f08010" stroke-width="0.7">D</text>
<text x="680.76" y="65.6" font-size="18.5" fill="#cfcfcf" textLength="62.42" lengthAdjust="spacingAndGlyphs"  stroke="#cfcfcf" stroke-width="0.3">40.4ms</text>
<path d="M827.2 37H1010.9L1021.7 45.6V75.8Q1021.7 77.8 1019.7 77.8H841.8L825.2 64.7V39Q825.2 37 827.2 37Z" fill="url(#gp)"/>
<path d="M854.7 40.6L1005.3 40.6L1018.6 51.2L1018.6 74L865.8 74L854.7 66Z" fill="#171b1d" stroke="#2c4a58" stroke-width="1.4"/><path d="M857.5 43.4L1004.2 43.4L1015.8 52.6L1015.8 71.4L866.8 71.4L857.5 64.8Z" fill="#000" stroke="#08223f" stroke-width="1.1"/>
<text x="832.2" y="65.9" font-size="26" fill="#a8a8a8" stroke="#a8a8a8" stroke-width="0.7">T</text>
<path d="M882 63.5H887.5V51.3H892.3" fill="none" stroke="#ffff00" stroke-width="1.2"/><path d="M887.5 53.6L893.2 59.8H881.8Z" fill="#ffff00"/>
<rect x="913" y="52" width="12.2" height="12" rx="2.2" fill="#ffff00"/>
<text x="919.1" y="63" font-size="12.5" fill="#000" text-anchor="middle" font-weight="bold" >1</text>
<text x="933.94" y="63.8" font-size="14.8" fill="#ffff00" textLength="37.52" lengthAdjust="spacingAndGlyphs"  stroke="#ffff00" stroke-width="0.3">0.00V</text>
<text x="998.97" y="63.8" font-size="14.8" fill="#86e000" textLength="9.25" lengthAdjust="spacingAndGlyphs"  stroke="#86e000" stroke-width="0.3">A</text>
<!-- bottom bar -->
<rect x="28" y="560" width="322" height="8" fill="#000"/><path d="M27.5 567.6V531.3L34 525H355.8V562L351.4 566.6" fill="#000" stroke="#5e666a" stroke-width="1.2"/>
<path d="M28.7 567V531.9L34.5 526.2H354.6V561.6L350.4 565.8" fill="none" stroke="#24404e" stroke-width="1.1"/>
<rect x="158" y="527.4" width="96.2" height="40.2" fill="#420000"/>
<text x="66.46" y="543.3" font-size="12.6" fill="#e6e600" textLength="55.76" lengthAdjust="spacingAndGlyphs"  stroke="#e6e600" stroke-width="0.3">FallTime1</text>
<text x="161.47" y="543.3" font-size="12.6" fill="#e6e600" textLength="60.15" lengthAdjust="spacingAndGlyphs"  stroke="#e6e600" stroke-width="0.3">RiseTime1</text>
<text x="256.32" y="543.3" font-size="12.6" fill="#e6e600" textLength="34.32" lengthAdjust="spacingAndGlyphs"  stroke="#e6e600" stroke-width="0.3">Freq1</text>
<text x="67.31" y="564.9" font-size="14.5" fill="#e0e0e0" textLength="34.97" lengthAdjust="spacingAndGlyphs"  stroke="#e0e0e0" stroke-width="0.3">*****</text>
<text x="257.21" y="564.9" font-size="14.5" fill="#e0e0e0" textLength="35.07" lengthAdjust="spacingAndGlyphs"  stroke="#e0e0e0" stroke-width="0.3">*****</text>
<text x="161.71" y="564.3" font-size="12.8" fill="#e0e0e0" textLength="52.76" lengthAdjust="spacingAndGlyphs"  stroke="#e0e0e0" stroke-width="0.3">409.72us</text>
<path d="M6 576.6H35.4L48.2 589.6V619.6Q48.2 623 44.8 623H15.8L2.6 610V580Q2.6 576.6 6 576.6Z" fill="url(#gm)" stroke="#8a8a8a" stroke-width="1.8"/>
<rect x="14.2" y="588" width="9" height="9.2" fill="#e83434"/>
<rect x="27.1" y="588" width="9" height="9.2" fill="#b41a1a"/>
<rect x="14.2" y="601.3" width="9" height="9.2" fill="#c01c1c"/>
<rect x="27.1" y="601.3" width="9" height="9.2" fill="#840a0a"/>
<path d="M55.2 576.5H184.8L190.4 582.3V622.7H65L55.2 613Z" fill="#ffff00"/>
<path d="M86 578.5H179L188 587.6V621H94L86 613.4Z" fill="#000"/>
<text x="69.4" y="607" font-size="25" fill="#000" text-anchor="middle" stroke="#000" stroke-width="0.8">1</text>
<rect x="90.4" y="586.4" width="12.4" height="2.3" fill="#ffff00"/><rect x="90.40" y="591.2" width="2" height="2.4" fill="#ffff00"/><rect x="93.87" y="591.2" width="2" height="2.4" fill="#ffff00"/><rect x="97.34" y="591.2" width="2" height="2.4" fill="#ffff00"/><rect x="100.81" y="591.2" width="2" height="2.4" fill="#ffff00"/>
<text x="108.65" y="596.4" font-size="16.5" fill="#ffff00" textLength="53.42" lengthAdjust="spacingAndGlyphs"  stroke="#ffff00" stroke-width="0.3">200mV</text>
<text x="120.57" y="615.7" font-size="16.5" fill="#ffff00" textLength="57.81" lengthAdjust="spacingAndGlyphs"  stroke="#ffff00" stroke-width="0.3">-336mV</text>
<path d="M196.4 576H324.70000000000005L330.9 584.6V623H205.0L194.4 612.8V578Q194.4 576 196.4 576Z" fill="url(#gb)" stroke="#565a5c" stroke-width="1"/><path d="M226.1 578H320.8L329.0 586.6V621.4H234.4L226.1 614Z" fill="#000" stroke="#2a4050" stroke-width="1"/><text x="210.20000000000002" y="607.3" font-size="25.5" fill="#050505" text-anchor="middle" stroke="#050505" stroke-width="0.8">2</text><rect x="230.8" y="586.4" width="12.4" height="2.3" fill="#929292"/><rect x="230.80" y="591.2" width="2" height="2.4" fill="#929292"/><rect x="234.27" y="591.2" width="2" height="2.4" fill="#929292"/><rect x="237.74" y="591.2" width="2" height="2.4" fill="#929292"/><rect x="241.21" y="591.2" width="2" height="2.4" fill="#929292"/><text x="249.55" y="596.4" font-size="16.5" fill="#8e8e8e" textLength="51.92" lengthAdjust="spacingAndGlyphs"  stroke="#8e8e8e" stroke-width="0.3">100mV</text><text x="276.37" y="615.8" font-size="16.5" fill="#8e8e8e" textLength="42.3" lengthAdjust="spacingAndGlyphs"  stroke="#8e8e8e" stroke-width="0.3">0.00V</text>
<path d="M336.2 576H464.5L470.7 584.6V623H344.8L334.2 612.8V578Q334.2 576 336.2 576Z" fill="url(#gb)" stroke="#565a5c" stroke-width="1"/><path d="M365.9 578H460.6L468.79999999999995 586.6V621.4H374.2L365.9 614Z" fill="#000" stroke="#2a4050" stroke-width="1"/><text x="350.0" y="607.3" font-size="25.5" fill="#050505" text-anchor="middle" stroke="#050505" stroke-width="0.8">3</text><rect x="370.59999999999997" y="586.4" width="12.4" height="2.3" fill="#929292"/><rect x="370.60" y="591.2" width="2" height="2.4" fill="#929292"/><rect x="374.07" y="591.2" width="2" height="2.4" fill="#929292"/><rect x="377.54" y="591.2" width="2" height="2.4" fill="#929292"/><rect x="381.01" y="591.2" width="2" height="2.4" fill="#929292"/><text x="389.35" y="596.4" font-size="16.5" fill="#8e8e8e" textLength="51.92" lengthAdjust="spacingAndGlyphs"  stroke="#8e8e8e" stroke-width="0.3">100mV</text><text x="416.17" y="615.8" font-size="16.5" fill="#8e8e8e" textLength="42.3" lengthAdjust="spacingAndGlyphs"  stroke="#8e8e8e" stroke-width="0.3">0.00V</text>
<path d="M476.4 576H604.7L610.9 584.6V623H485.0L474.4 612.8V578Q474.4 576 476.4 576Z" fill="url(#gb)" stroke="#565a5c" stroke-width="1"/><path d="M506.09999999999997 578H600.8L609.0 586.6V621.4H514.4L506.09999999999997 614Z" fill="#000" stroke="#2a4050" stroke-width="1"/><text x="490.2" y="607.3" font-size="25.5" fill="#050505" text-anchor="middle" stroke="#050505" stroke-width="0.8">4</text><rect x="510.79999999999995" y="586.4" width="12.4" height="2.3" fill="#929292"/><rect x="510.80" y="591.2" width="2" height="2.4" fill="#929292"/><rect x="514.27" y="591.2" width="2" height="2.4" fill="#929292"/><rect x="517.74" y="591.2" width="2" height="2.4" fill="#929292"/><rect x="521.21" y="591.2" width="2" height="2.4" fill="#929292"/><text x="529.55" y="596.4" font-size="16.5" fill="#8e8e8e" textLength="51.92" lengthAdjust="spacingAndGlyphs"  stroke="#8e8e8e" stroke-width="0.3">100mV</text><text x="556.37" y="615.8" font-size="16.5" fill="#8e8e8e" textLength="42.3" lengthAdjust="spacingAndGlyphs"  stroke="#8e8e8e" stroke-width="0.3">0.00V</text>
<path d="M617.2 576H739.7L746.2 583.5V623H625.8000000000001L615.2 612.8V578Q615.2 576 617.2 576Z" fill="url(#gb)" stroke="#565a5c" stroke-width="1"/>
<path d="M645.2 578H738.2L744.4000000000001 585V621.4H653.2L645.2 614Z" fill="#000" stroke="#2a4050" stroke-width="1"/>
<text x="632" y="604.2" font-size="22.5" fill="#050505" text-anchor="middle" stroke="#050505" stroke-width="0.8">L</text>
<text x="654" y="596.3" font-size="10" fill="#c0c0c0" text-anchor="middle" transform="translate(654 0) scale(0.82 1) translate(-654 0)">0</text>
<text x="654" y="613.1" font-size="10" fill="#c0c0c0" text-anchor="middle" transform="translate(654 0) scale(0.82 1) translate(-654 0)">8</text>
<text x="665" y="596.3" font-size="10" fill="#c0c0c0" text-anchor="middle" transform="translate(665 0) scale(0.82 1) translate(-665 0)">1</text>
<text x="665" y="613.1" font-size="10" fill="#c0c0c0" text-anchor="middle" transform="translate(665 0) scale(0.82 1) translate(-665 0)">9</text>
<text x="676" y="596.3" font-size="10" fill="#c0c0c0" text-anchor="middle" transform="translate(676 0) scale(0.82 1) translate(-676 0)">2</text>
<text x="676" y="613.1" font-size="10" fill="#c0c0c0" text-anchor="middle" transform="translate(676 0) scale(0.8 1) translate(-676 0)">10</text>
<text x="687" y="596.3" font-size="10" fill="#c0c0c0" text-anchor="middle" transform="translate(687 0) scale(0.82 1) translate(-687 0)">3</text>
<text x="687" y="613.1" font-size="10" fill="#c0c0c0" text-anchor="middle" transform="translate(687 0) scale(0.8 1) translate(-687 0)">11</text>
<text x="701" y="596.3" font-size="10" fill="#c0c0c0" text-anchor="middle" transform="translate(701 0) scale(0.82 1) translate(-701 0)">4</text>
<text x="701" y="613.1" font-size="10" fill="#c0c0c0" text-anchor="middle" transform="translate(701 0) scale(0.8 1) translate(-701 0)">12</text>
<text x="712" y="596.3" font-size="10" fill="#c0c0c0" text-anchor="middle" transform="translate(712 0) scale(0.82 1) translate(-712 0)">5</text>
<text x="712" y="613.1" font-size="10" fill="#c0c0c0" text-anchor="middle" transform="translate(712 0) scale(0.8 1) translate(-712 0)">13</text>
<text x="723" y="596.3" font-size="10" fill="#c0c0c0" text-anchor="middle" transform="translate(723 0) scale(0.82 1) translate(-723 0)">6</text>
<text x="723" y="613.1" font-size="10" fill="#c0c0c0" text-anchor="middle" transform="translate(723 0) scale(0.8 1) translate(-723 0)">14</text>
<text x="734" y="596.3" font-size="10" fill="#c0c0c0" text-anchor="middle" transform="translate(734 0) scale(0.82 1) translate(-734 0)">7</text>
<text x="734" y="613.1" font-size="10" fill="#c0c0c0" text-anchor="middle" transform="translate(734 0) scale(0.8 1) translate(-734 0)">15</text>
<text x="977.45" y="620.8" font-size="16" fill="#b4b4b4" textLength="41.2" lengthAdjust="spacingAndGlyphs"  stroke="#b4b4b4" stroke-width="0.1">11:50</text>
<g stroke="#c8c8c8" stroke-width="1" fill="none"><path d="M933.5 606V621"/><path d="M933.5 617L930 613.5V610.5"/><path d="M933.5 615L937 611.5V609.5"/><path d="M931.8 607.5L933.5 604.6L935.2 607.5"/></g><circle cx="933.5" cy="622" r="1.6" fill="#c8c8c8"/><rect x="936" y="608" width="2" height="2" fill="#c8c8c8"/><circle cx="930" cy="610" r="1.1" fill="#c8c8c8"/>
<g stroke="#d4d4d4" stroke-width="1.5" fill="none" stroke-linejoin="round"><path d="M952.8 613.6L960 606.8H962.4V620.8H960Z"/><path d="M959.6 610V617.4" stroke-width="1"/><path d="M964.6 610.8L971.2 618M971.2 610.8L964.6 618" stroke-width="1"/></g>
</svg>
</body></html>
